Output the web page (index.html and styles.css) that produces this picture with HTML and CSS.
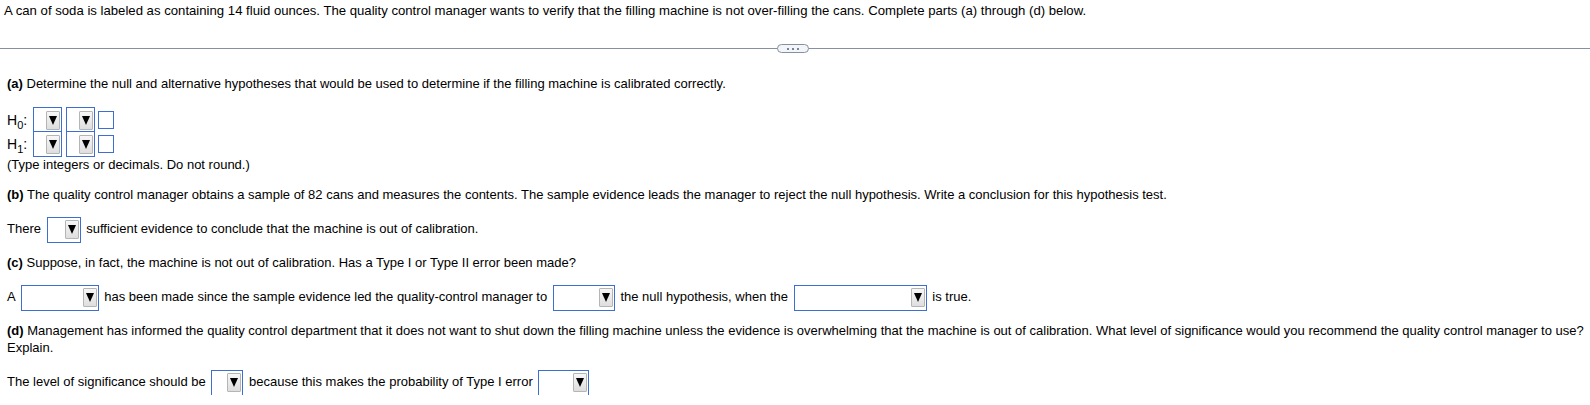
FILE: index.html
```html
<!DOCTYPE html>
<html>
<head>
<meta charset="utf-8">
<link rel="stylesheet" href="styles.css">
</head>
<body>
<div class="intro">A can of soda is labeled as containing 14 fluid ounces. The quality control manager wants to verify that the filling machine is not over-filling the cans. Complete parts (a) through (d) below.</div>
<div class="divider"><span class="pill"><i></i><i></i><i></i></span></div>
<div class="content">
  <p class="part part-a"><b>(a)</b> Determine the null and alternative hypotheses that would be used to determine if the filling machine is calibrated correctly.</p>
  <div class="hyp first">
    <span class="hlabel">H<sub>0</sub>:</span>
    <span class="dd dd-h"><span class="btn"><span class="tri"></span></span></span>
    <span class="dd dd-h dd-h2"><span class="btn"><span class="tri"></span></span></span>
    <span class="box"></span>
  </div>
  <div class="hyp">
    <span class="hlabel">H<sub>1</sub>:</span>
    <span class="dd dd-h"><span class="btn"><span class="tri"></span></span></span>
    <span class="dd dd-h dd-h2"><span class="btn"><span class="tri"></span></span></span>
    <span class="box"></span>
  </div>
  <p class="note">(Type integers or decimals. Do not round.)</p>
  <p class="part"><b>(b)</b> The quality control manager obtains a sample of 82 cans and measures the contents. The sample evidence leads the manager to reject the null hypothesis. Write a conclusion for this hypothesis test.</p>
  <div class="row">There <span class="dd dd-there"><span class="btn"><span class="tri"></span></span></span> sufficient evidence to conclude that the machine is out of calibration.</div>
  <p class="part"><b>(c)</b> Suppose, in fact, the machine is not out of calibration. Has a Type I or Type II error been made?</p>
  <div class="row">A <span class="dd dd-a"><span class="btn"><span class="tri"></span></span></span> has been made since the sample evidence led the quality-control manager to <span class="dd dd-to"><span class="btn"><span class="tri"></span></span></span> the null hypothesis, when the <span class="dd dd-when"><span class="btn"><span class="tri"></span></span></span> is true.</div>
  <p class="part"><b>(d)</b> Management has informed the quality control department that it does not want to shut down the filling machine unless the evidence is overwhelming that the machine is out of calibration. What level of significance would you recommend the quality control manager to use? Explain.</p>
  <div class="row">The level of significance should be <span class="dd dd-level"><span class="btn"><span class="tri"></span></span></span> because this makes the probability of Type I error <span class="dd dd-err"><span class="btn"><span class="tri"></span></span></span></div>
</div>
</body>
</html>
```
FILE: styles.css
```css
html, body {
  margin: 0;
  padding: 0;
  background: #fff;
}
body {
  font-family: "Liberation Sans", Arial, sans-serif;
  font-size: 13px;
  line-height: 17px;
  color: #000;
}
.intro {
  padding: 2px 4px 0 4px;
  font-size: 13.17px;
}
.divider {
  margin-top: 25px;
  height: 9px;
  position: relative;
  display: flex;
  align-items: center;
  justify-content: center;
}
.divider::before {
  content: "";
  position: absolute;
  left: 0;
  right: 0;
  top: 4px;
  height: 1px;
  background: #8790a1;
}
.pill {
  position: relative;
  width: 30px;
  height: 7px;
  border: 1px solid #8790a1;
  border-radius: 5px;
  background: #f3f5f8;
  display: flex;
  align-items: center;
  justify-content: center;
  gap: 3px;
  margin-left: -5px;
}
.pill i {
  width: 2px;
  height: 2px;
  background: #4e5d78;
  border-radius: 1px;
}
.content {
  padding: 0 5px 0 7px;
}
p {
  margin: 0;
}
.part {
  margin-top: 13px;
}
.row + .part {
  margin-top: 12px;
}
.part-a {
  margin-top: 22px;
}
b {
  font-weight: bold;
}
.hyp {
  display: flex;
  align-items: center;
  height: 24px;
}
.hyp.first {
  margin-top: 16px;
}
.hlabel {
  width: 26px;
  font-size: 14px;
}
.hlabel sub {
  font-size: 11px;
  vertical-align: -4px;
  line-height: 0;
}
.dd {
  display: inline-flex;
  justify-content: flex-end;
  align-items: center;
  box-sizing: border-box;
  height: 26px;
  border: 1px solid #3c6fd1;
  background: #fff;
  padding-right: 1px;
  vertical-align: middle;
  margin: 0 2px;
}
.btn {
  box-sizing: border-box;
  width: 14px;
  height: 19px;
  background: linear-gradient(#f7f7f7, #dedede);
  border: 1px solid #b5b5b5;
  border-radius: 1px;
  display: flex;
  align-items: center;
  justify-content: center;
}
.tri {
  width: 0;
  height: 0;
  border-left: 4.5px solid transparent;
  border-right: 4.5px solid transparent;
  border-top: 9px solid #000;
}
.dd-h {
  width: 29px;
  margin: -1px 0;
}
.dd-h2 {
  margin-left: 4px;
}
.box {
  box-sizing: border-box;
  width: 16px;
  height: 18px;
  border: 1px solid #3c6fd1;
  margin-left: 3px;
}
.note {
  margin-top: 0;
}
.row {
  margin-top: 13px;
  height: 26px;
  line-height: 26px;
  white-space: nowrap;
}
.dd-there { width: 34px; }
.dd-a { width: 78px; }
.dd-to { width: 62px; }
.dd-when { width: 133px; }
.dd-level { width: 32px; }
.dd-err { width: 51px; }
```
